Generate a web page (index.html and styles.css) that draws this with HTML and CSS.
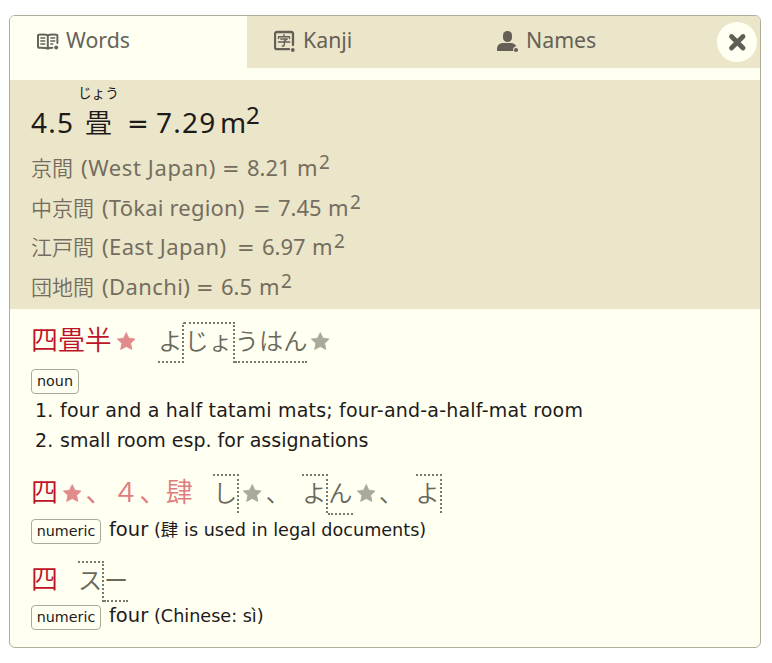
FILE: index.html
```
<!DOCTYPE html>
<html lang="ja">
<head>
<meta charset="utf-8">
<title>四畳半</title>
<link rel="stylesheet" href="styles.css">
</head>
<body>
<svg class="defs" width="0" height="0"><symbol id="star" viewBox="0 0 18 18"><path d="M9 .5 11.6 6 17.7 6.8 13.3 11 14.4 17 9 14.1 3.6 17 4.7 11 .3 6.8 6.4 6Z" fill="currentColor" stroke="currentColor" stroke-width=".8" stroke-linejoin="round"/></symbol></svg>
<main class="popup">
  <nav class="tabs">
    <div class="tab active">
      <svg class="icon" viewBox="0 0 22 22"><g fill="none" stroke="currentColor" stroke-width="2" stroke-linejoin="round" stroke-linecap="round"><path d="M10.8 5.200C9 4.400 5 4.400 1.500 4.700Q1 4.700 1 5.500v11.500q0 .8.8.8C5 17.700 9 17.700 10.800 18.700V5.200C12.600 4.400 16.500 4.400 19.800 4.700q.6 0 .6.8v7.500M10.800 18.700c1-.7 2.500-1 4.500-1"/><path stroke-width="1.400" d="M3.800 8h4M3.800 11h4M3.800 14h4M13.800 8h4M13.800 11h4M13.800 14h2"/></g><circle cx="19.200" cy="17.500" r="2" fill="currentColor"/></svg>
      <span>Words</span>
    </div>
    <div class="tab kanji-tab">
      <svg class="icon" viewBox="0 0 22 22"><g fill="none" stroke="currentColor" stroke-linecap="round" stroke-linejoin="round"><path stroke-width="2.300" d="M15 19.200H3A2 2 0 0 1 1 17.200V4A2 2 0 0 1 3 2H17A2 2 0 0 1 19 4V15"/><path stroke-width="1.400" d="M10 4.800v1.500M4.500 8.500V6.700h11v1.800M6.700 9h6.600L10.300 11v4q0 1.200-2 1M4.400 12h11.400"/></g><circle cx="18.800" cy="20" r="1.900" fill="currentColor"/></svg>
      <span>Kanji</span>
    </div>
    <div class="tab names-tab">
      <svg class="icon" viewBox="0 0 22 22"><g fill="currentColor"><rect x="6" y="1" width="9" height="11" rx="4.300"/><path d="M0 21v-2c0-4 3-6 6-6h8c2.500 0 4.500 1.300 5.300 3.500a3 3 0 0 0-2.800 4.500Z"/><circle cx="19" cy="20" r="2"/></g></svg>
      <span>Names</span>
    </div>
    <button class="close" aria-label="Close"><svg viewBox="0 0 40 40"><path d="M14.500 14.500 26 26M26 14.500 14.500 26" stroke="currentColor" stroke-width="4.800" stroke-linecap="round"/></svg></button>
  </nav>
  <section class="measures">
    <div class="total"><span class="amount">4.5</span><span class="unit">畳<span class="furigana">じょう</span></span><span class="equals">=</span><span class="value">7.29</span><span class="metre">m</span><span class="power">2</span></div>
    <div class="measure"><span class="jp">京間</span><span class="label west">(West Japan)</span><span class="equals">=</span><span class="value">8.21</span><span class="metre">m</span><span class="power">2</span></div>
    <div class="measure"><span class="jp">中京間</span><span class="label tokai">(Tōkai region)</span><span class="equals">=</span><span class="value">7.45</span><span class="metre">m</span><span class="power">2</span></div>
    <div class="measure"><span class="jp">江戸間</span><span class="label east">(East Japan)</span><span class="equals">=</span><span class="value">6.97</span><span class="metre">m</span><span class="power">2</span></div>
    <div class="measure"><span class="jp">団地間</span><span class="label danchi">(Danchi)</span><span class="equals">=</span><span class="value short">6.5</span><span class="metre">m</span><span class="power">2</span></div>
  </section>
  <section class="entry first">
    <div class="head"><span class="kanji">四畳半</span><svg class="star red"><use href="#star"/></svg><span class="kana start"><span class="low drop">よ</span><span class="high drop">じょ</span><span class="low">うはん</span></span><svg class="star"><use href="#star"/></svg></div>
    <div class="tag-row"><span class="tag noun">noun</span></div>
    <ol class="senses"><li><span class="num">1.</span><span>four and a half tatami mats; four-and-a-half-mat room</span></li><li><span class="num">2.</span><span class="tight">small room esp. for assignations</span></li></ol>
  </section>
  <section class="entry second">
    <div class="head"><span class="kanji">四</span><svg class="star red"><use href="#star"/></svg><span class="kanji rare">、４、肆</span><span class="kana shi"><span class="high drop">し</span></span><svg class="star"><use href="#star"/></svg><span class="comma">、</span><span class="kana"><span class="high drop">よ</span><span class="low">ん</span></span><svg class="star"><use href="#star"/></svg><span class="comma">、</span><span class="kana"><span class="high drop">よ</span></span></div>
    <div class="tag-row"><span class="tag">numeric</span><span class="gloss">four</span><span class="note">(肆 is used in legal documents)</span></div>
  </section>
  <section class="entry third">
    <div class="head"><span class="kanji">四</span><span class="kana su"><span class="high drop">ス</span><span class="low">ー</span></span></div>
    <div class="tag-row"><span class="tag">numeric</span><span class="gloss">four</span><span class="note">(Chinese: sì)</span></div>
  </section>
</main>
</body>
</html>
```
FILE: styles.css
```
* { box-sizing: border-box; }
body { margin: 0; background: #fff; font-family: "DejaVu Sans", "Noto Sans CJK JP", sans-serif; color: #1d1a19; }
.defs { position: absolute; }
.popup { width: 752px; height: 633px; margin: 15px 0 0 9px; border: 1px solid #b0ad98; border-radius: 6px; background: #fffff2; overflow: hidden; white-space: nowrap; }
.tabs { display: flex; height: 52px; background: #ebe6c9; color: #655f58; font-family: "Noto Sans", sans-serif; font-size: 21.300px; line-height: 47px; }
.tab { display: flex; width: 237px; padding-left: 27px; }
.tab.active { background: #fffff2; color: #65635a; }
.names-tab { width: 223px; padding-left: 13px; }
.icon { width: 22px; height: 22px; margin-top: 14px; margin-right: 7px; flex: none; }
.close { width: 40px; height: 40px; margin: 6px 0 0 10px; padding: 0; border: 0; border-radius: 50%; background: #fffff2; color: #615e55; flex: none; }
.close svg { display: block; }
.measures { height: 229px; margin-top: 12px; padding: 22px 0 0 21px; background: #ebe6c9; color: #746d5f; font-family: "Noto Sans", "Noto Sans CJK JP", sans-serif; }
.total { display: flex; height: 40px; margin-bottom: 6px; font-size: 28px; line-height: 40px; color: #1d1a19; letter-spacing: 1.200px; }
.total .amount { width: 54px; }
.unit { position: relative; width: 44px; font-size: 27px; line-height: 39px; letter-spacing: 0; font-family: "Noto Sans CJK JP", sans-serif; font-weight: 350; }
.furigana { position: absolute; left: -7px; top: -20px; font-size: 13.600px; line-height: 20px; font-weight: 400; }
.equals { width: 25px; margin-left: -2px; font-family: "DejaVu Sans", sans-serif; font-size: 21px; line-height: 42px; }
.total .equals { width: 29px; font-size: 26px; line-height: 44px; }
.value { width: 50px; }
.value.short { width: 38px; }
.total .value { width: 64px; }
.metre { width: 22px; }
.total .metre { width: 26px; }
.power { font-size: 19px; transform: translateY(-5px); }
.total .power { font-size: 24px; transform: translateY(-7px); }
.measure { display: flex; height: 39.600px; font-size: 22px; line-height: 39.600px; }
.jp { margin-right: 8px; font-size: 21px; line-height: 38.600px; font-weight: 350; font-family: "Noto Sans CJK JP", sans-serif; }
.label { letter-spacing: .4px; }
.west { width: 143px; letter-spacing: .6px; }
.tokai { width: 153px; letter-spacing: .2px; }
.east { width: 137px; letter-spacing: .4px; }
.danchi { width: 96px; }
.entry { padding-left: 21px; }
.entry.first { padding-top: 13px; }
.head { display: flex; height: 42px; font-family: "Noto Sans CJK JP", sans-serif; font-weight: 350; }
.kanji { font-size: 26.900px; line-height: 34px; color: #be1328; }
.rare { color: #df7c7d; margin-left: 4px; }
.star { width: 18.500px; height: 18.500px; margin: 10px 0 0 4px; flex: none; color: #aaa99c; }
.star.red { margin-left: 5px; color: #e18b8d; }
.kana { display: flex; height: 41px; color: #68695a; font-size: 24.200px; line-height: 31px; }
.kana > span { height: 41px; border: 0 dotted #7b7a6a; border-top: 2px solid transparent; }
.kana .high { border-top: 2px dotted #7b7a6a; }
.kana .low { border-bottom-width: 2px; }
.kana .drop { border-right-width: 2px; }
.kana.start { margin-left: 23px; }
.kana.shi { margin-left: 20px; }
.kana.su { margin-left: 20px; }
.second .kana .high { height: 39px; }
.comma { margin-left: 4px; width: 36.500px; color: #68695a; font-size: 24px; line-height: 35px; }
.tag-row { display: flex; height: 25px; line-height: 26px; }
.tag { width: 70px; height: 25px; border: 1px solid #aaa99c; border-radius: 4px; text-align: center; font-size: 14.300px; line-height: 22px; }
.tag.noun { width: 48px; }
.first .tag-row { margin-top: 5px; }
.senses { list-style: none; margin: 1px 0 0; padding: 0; font-size: 19px; line-height: 30px; letter-spacing: .2px; }
.senses li { display: flex; height: 30px; }
.num { width: 29px; padding-left: 4px; }
.tight { letter-spacing: 0; }
.second { padding-top: 19px; }
.second .tag-row { margin-top: 3px; }
.gloss { width: 45px; margin-left: 8px; font-size: 19.500px; line-height: 21px; }
.note { font-size: 17.600px; line-height: 22px; }
.third { padding-top: 17px; }
.third .tag-row { margin-top: 2px; }
```
